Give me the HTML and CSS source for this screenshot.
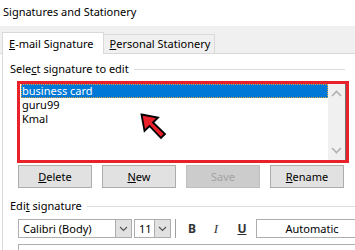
FILE: index.html
```html
<!DOCTYPE html>
<html lang="en">
<head>
  <meta charset="UTF-8" />
  <title>Signatures and Stationery</title>
  <link rel="stylesheet" href="styles.css">
</head>
<body>

<div class="dialog">
  <div class="title">Signatures and Stationery</div>

  <div class="tabs">
    <div class="tab active"><u>E</u>-mail Signature</div>
    <div class="tab"><u>P</u>ersonal Stationery</div>
  </div>

  <div class="panel">
    <div class="group-label"><span>Sele<u>c</u>t signature to edit</span><div class="rule"></div></div>

    <div class="highlight">
      <div class="listbox">
        <div class="items">
          <div class="item selected">business card</div>
          <div class="item">guru99</div>
          <div class="item">Kmal</div>
        </div>
        <div class="scrollbar">
          <svg width="11" height="7" viewBox="0 0 11 7"><path d="M1 6 L5.5 1.5 L10 6" fill="none" stroke="#b0b0b0" stroke-width="1.6"/></svg>
          <svg width="11" height="7" viewBox="0 0 11 7"><path d="M1 1 L5.5 5.5 L10 1" fill="none" stroke="#b0b0b0" stroke-width="1.6"/></svg>
        </div>
      </div>
      <!-- pointer drawn over the list -->
      <svg class="pointer" width="28" height="28" viewBox="0 0 28 28">
        <polygon points="1.5,1.5 18,4.5 13,9.5 25,21 21,25 9.5,13 4.5,18" fill="#e8212a" stroke="#000" stroke-width="1.8" stroke-linejoin="miter"/>
      </svg>
    </div>

    <div class="buttons">
      <button class="btn"><u>D</u>elete</button>
      <button class="btn"><u>N</u>ew</button>
      <button class="btn disabled">Save</button>
      <button class="btn"><u>R</u>ename</button>
    </div>

    <div class="group-label edit"><span>Edi<u>t</u> signature</span><div class="rule"></div></div>

    <div class="toolbar">
      <div class="select font">
        <span class="value">Calibri (Body)</span>
        <span class="drop"><svg width="9" height="6" viewBox="0 0 9 6"><path d="M1 1 L4.5 4.5 L8 1" fill="none" stroke="#555" stroke-width="1.2"/></svg></span>
      </div>
      <div class="select size">
        <span class="value">11</span>
        <span class="drop"><svg width="9" height="6" viewBox="0 0 9 6"><path d="M1 1 L4.5 4.5 L8 1" fill="none" stroke="#555" stroke-width="1.2"/></svg></span>
      </div>
      <div class="sep"></div>
      <span class="fmt b">B</span>
      <span class="fmt i">I</span>
      <span class="fmt u">U</span>
      <div class="color">Automatic</div>
    </div>

    <div class="editor"></div>
  </div>
</div>

</body>
</html>
```

FILE: styles.css
```css
body {
  margin:0; background:#fff; color:#000;
  font-family: "Noto Sans", "Open Sans", sans-serif;
  font-size:11px;
}
.dialog {
  width:355px; height:250px; overflow:hidden;
  display:flex; flex-direction:column;
}
.title {
  height:26px; line-height:24px; padding-left:3px; flex-shrink:0;
}
.tabs {
  height:28px; flex-shrink:0;
  background:#f0f0f0;
  border-bottom:1px solid #d9d9d9;
  display:flex; align-items:flex-end;
  padding-left:2px;
  box-sizing:border-box;
}
.tab {
  height:19px; line-height:18px;
  padding:0 4px 0 6px;
  border:1px solid #d9d9d9; border-bottom:none;
  box-sizing:border-box;
}
.tab.active {
  height:22px; line-height:22px;
  background:#fff;
  padding:0 9px 0 6px;
  margin-bottom:-1px;
}
.tab + .tab {
  border-left:none;
}
.panel {
  flex:1;
  border-left:1px solid #d9d9d9;
  margin-left:2px;
  padding:6px 0 0 15px;
}
.group-label {
  display:flex; align-items:center; gap:5px;
  margin-left:-8px; margin-right:10px;
  height:17px;
}
.group-label .rule {
  flex:1; border-top:1px solid #dcdcdc; margin-top:1px;
}
.group-label.edit {
  margin-top:9px; margin-right:0;
}
.highlight {
  position:relative;
  margin:4px 0 0 -1px;
  width:332px; height:82px;
  border:3px solid #e8212a;
  box-sizing:border-box;
}
.listbox {
  display:flex; height:100%;
  border-right:1px solid #6f6f6f;
}
.items {
  flex:1; padding-left:1px;
}
.item {
  height:14px; line-height:14px;
  padding-left:1px;
}
.item.selected {
  background:#0078d7; color:#fff;
  outline:1px dotted #e0a040; outline-offset:-1px;
}
.scrollbar {
  width:17px; background:#f0f0f0;
  display:flex; flex-direction:column; justify-content:space-between; align-items:center;
  padding:6px 0 6px;
}
.pointer {
  position:absolute; left:120px; top:29px;
}
.buttons {
  display:flex; gap:10px; margin-top:2px;
}
.btn {
  width:74px; height:23px; flex-shrink:0;
  background:#e1e1e1; border:1px solid #adadad;
  font-family:inherit; font-size:11px; color:#000;
  padding:0;
}
.btn.disabled {
  background:#cccccc; border-color:#bfbfbf; color:#a3a3a3;
}
.toolbar {
  display:flex; align-items:center;
  margin-top:5px; height:19px;
}
.toolbar > * {
  flex-shrink:0;
}
.select {
  display:flex; height:19px;
  border:1px solid #adadad; box-sizing:border-box;
  background:#fff;
}
.select .value {
  flex:1; padding-left:4px; line-height:17px;
}
.select .drop {
  width:15px; background:#e1e1e1; border-left:1px solid #adadad;
  display:flex; align-items:center; justify-content:center;
}
.select.font { width:114px; }
.select.size { width:37px; margin-left:2px; }
.sep {
  width:1px; height:19px; background:#a0a0a0; margin-left:4px;
}
.fmt {
  font-size:12px; color:#333; width:12px; text-align:center;
}
.fmt.b { font-weight:700; margin-left:10px; }
.fmt.i { font-style:italic; margin-left:12px; font-family:"Liberation Serif", serif; font-size:13px; }
.fmt.u { text-decoration:underline; font-weight:700; margin-left:14px; }
.color {
  width:112px; height:19px;
  border:1px solid #adadad; box-sizing:border-box;
  margin-left:8px;
  text-align:center; line-height:17px;
}
.editor {
  margin-top:6px;
  height:20px; border-top:1px solid #adadad; border-left:1px solid #adadad;
}
```
